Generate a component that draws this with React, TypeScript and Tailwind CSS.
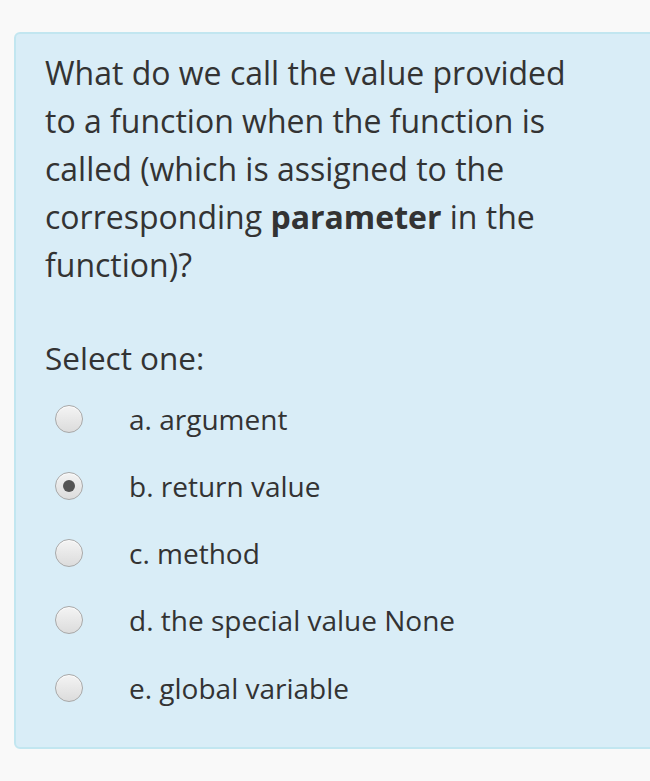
import React from "react";

const options = [
  { label: "a. argument", checked: false },
  { label: "b. return value", checked: true },
  { label: "c. method", checked: false },
  { label: "d. the special value None", checked: false },
  { label: "e. global variable", checked: false },
];

function Radio({ checked }: { checked: boolean }) {
  return (
    <span className="relative flex h-[28px] w-[28px] shrink-0 items-center justify-center rounded-full border border-[#a8a8a8] bg-gradient-to-b from-[#f4f4f4] to-[#dcdcdc] shadow-[inset_0_1px_1px_rgba(255,255,255,0.8)]">
      {checked && <span className="h-[12px] w-[12px] rounded-full bg-[#555]" />}
    </span>
  );
}

export default function App() {
  return (
    <div
      className="min-h-[781px] w-[650px] overflow-hidden bg-[#f9f9f9] pt-[32px]"
      style={{ fontFamily: '"Open Sans", sans-serif' }}
    >
      <div className="ml-[14px] mr-[-20px] h-[717px] rounded-[6px] border-2 border-[#c2e6f0] bg-[#d9edf7] pl-[29px] pt-[15px] text-[#333]">
        <p className="w-[540px] text-[32px] leading-[48px]">
          What do we call the value provided to a function when the function is called (which is assigned to the
          corresponding <b className="font-bold">parameter</b> in the function)?
        </p>
        <p className="mt-[45px] text-[31.5px] leading-[48px]">Select one:</p>
        <div className="mt-[3px] flex flex-col">
          {options.map((o) => (
            <div key={o.label} className="flex h-[67.25px] items-center">
              <span className="ml-[10px]">
                <Radio checked={o.checked} />
              </span>
              <span className="ml-[46px] text-[28px]">{o.label}</span>
            </div>
          ))}
        </div>
      </div>
    </div>
  );
}
